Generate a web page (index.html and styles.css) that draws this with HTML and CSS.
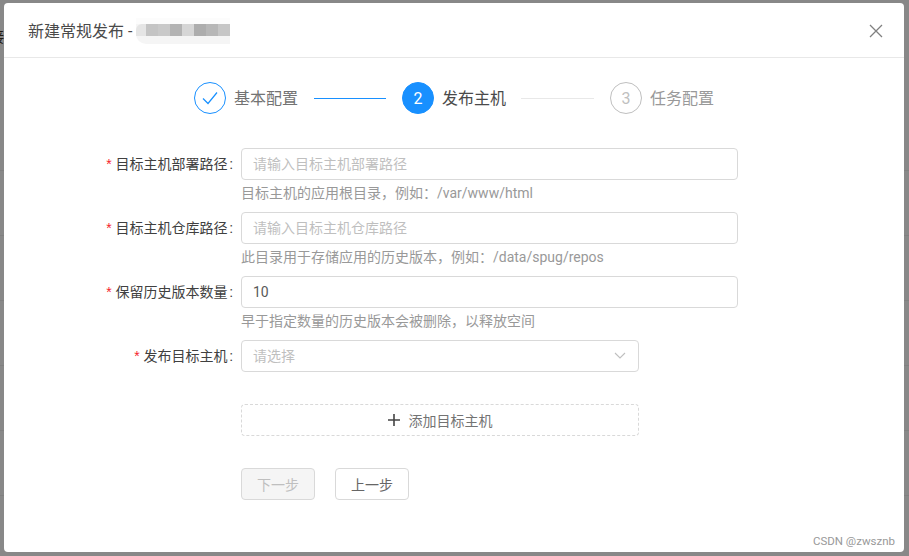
FILE: index.html
```html
<!DOCTYPE html>
<html lang="zh-CN">
<head>
    <meta charset="UTF-8">
    <meta name="viewport" content="width=device-width, initial-scale=1.0">
    <title>新建常规发布</title>
    <link rel="stylesheet" href="styles.css">
</head>
<body>
    <span class="backdrop-text">接</span>

    <div class="modal">
        <div class="modal-header">
            <div class="modal-title">
                <span>新建常规发布 -</span>
                <span class="mosaic">
                    <i class="m-first"></i><i class="m2"></i><i class="m3"></i><i class="m4"></i><i class="m5"></i><i class="m6"></i><i class="m7"></i><i class="m8"></i>
                </span>
            </div>
            <svg class="modal-close" viewBox="0 0 14 14" width="14" height="14">
                <path d="M1 1L13 13M13 1L1 13" fill="none" stroke="#808080" stroke-width="1.3"/>
            </svg>
        </div>

        <div class="steps">
            <div class="step step-done">
                <span class="step-icon">
                    <svg viewBox="0 0 16 14" width="16" height="14">
                        <path d="M1 7.5L6 12.5L15 1.5" fill="none" stroke="#1890ff" stroke-width="1.2"/>
                    </svg>
                </span>
                <span class="step-title">基本配置</span>
            </div>
            <span class="step-line line-done"></span>
            <div class="step step-active">
                <span class="step-icon">2</span>
                <span class="step-title">发布主机</span>
            </div>
            <span class="step-line line-wait"></span>
            <div class="step step-wait">
                <span class="step-icon">3</span>
                <span class="step-title">任务配置</span>
            </div>
        </div>

        <form class="form">
            <div class="form-group">
                <label class="required">目标主机部署路径</label>
                <div class="control">
                    <input type="text" placeholder="请输入目标主机部署路径">
                    <div class="extra">目标主机的应用根目录，例如：/var/www/html</div>
                </div>
            </div>
            <div class="form-group">
                <label class="required">目标主机仓库路径</label>
                <div class="control">
                    <input type="text" placeholder="请输入目标主机仓库路径">
                    <div class="extra">此目录用于存储应用的历史版本，例如：/data/spug/repos</div>
                </div>
            </div>
            <div class="form-group">
                <label class="required">保留历史版本数量</label>
                <div class="control">
                    <input type="text" value="10">
                    <div class="extra">早于指定数量的历史版本会被删除，以释放空间</div>
                </div>
            </div>
            <div class="form-group form-group-host">
                <label class="required">发布目标主机</label>
                <div class="control control-short">
                    <div class="select">
                        <span>请选择</span>
                        <svg viewBox="0 0 12 7" width="12" height="7">
                            <path d="M1 1L6 6L11 1" fill="none" stroke="#bfbfbf" stroke-width="1.1"/>
                        </svg>
                    </div>
                </div>
            </div>
            <div class="form-group form-group-add">
                <div class="control control-short">
                    <button type="button" class="btn-dashed">
                        <svg viewBox="0 0 12 12" width="12" height="12">
                            <path d="M6 0V12M0 6H12" fill="none" stroke="#444" stroke-width="1.6"/>
                        </svg>
                        <span>添加目标主机</span>
                    </button>
                </div>
            </div>
            <div class="form-actions">
                <button type="button" class="btn" disabled>下一步</button>
                <button type="button" class="btn">上一步</button>
            </div>
        </form>

        <div class="watermark">CSDN @zwsznb</div>
    </div>
</body>
</html>
```

FILE: styles.css
```css
* {
    box-sizing: border-box;
}

html, body {
    height: 100%;
    overflow: hidden;
}

body {
    position: relative;
    margin: 0;
    padding: 3px 5px 4px 4px;
    background-color: #888888;
    /* table rows showing through the mask, only below the header */
    background-image:
        linear-gradient(#888888 0 170px, transparent 170px),
        repeating-linear-gradient(to bottom, #888888 0 40px, #808080 40px 41px, #888888 41px 65px);
    font-family: Roboto, "Noto Sans CJK SC", sans-serif;
    font-size: 14px;
    color: #444;
}

.backdrop-text {
    position: absolute;
    left: -10px;
    top: 26px;
    font-size: 14px;
    color: #201810;
}

.modal {
    position: relative;
    height: 549px;
    background-color: #fff;
    border-radius: 4px;
}

.modal-header {
    display: flex;
    justify-content: space-between;
    align-items: center;
    height: 55px;
    padding: 0 21px 0 24px;
    border-bottom: 1px solid #e8e8e8;
}

.modal-title {
    display: flex;
    align-items: center;
    font-size: 16px;
    color: #4a4a4a;
}

.mosaic {
    display: flex;
    width: 94px;
    height: 26px;
    margin-left: 4px;
    margin-top: 2px;
    padding-top: 6px;
    border-bottom-left-radius: 10px;
    background: linear-gradient(#fcfcfc 0 6px, #f5f5f5 6px);
}

.mosaic i {
    width: 12px;
    height: 12px;
}

.mosaic .m-first {
    width: 10px;
    border-radius: 6px 0 0 0;
    background-color: #e5e5e5;
}

.m2 { background-color: #c4c4c4; }
.m3 { background-color: #c9c9c9; }
.m4 { background-color: #b3b3b3; }
.m5 { background-color: #d6d6d6; }
.m6 { background-color: #adadad; }
.m7 { background-color: #b7b7b7; }
.m8 { background-color: #c6c6c6; }

.modal-close {
    margin-top: 2px;
}

.steps {
    display: flex;
    align-items: center;
    justify-content: center;
    margin-top: 24px;
}

.step {
    display: flex;
    align-items: center;
    gap: 8px;
}

.step-icon {
    display: flex;
    align-items: center;
    justify-content: center;
    width: 32px;
    height: 32px;
    border: 1px solid #1890ff;
    border-radius: 50%;
    font-size: 16px;
}

.step-title {
    padding-top: 2px;
    font-size: 16px;
    line-height: 30px;
}

.step-done .step-title {
    color: #737373;
}

.step-active .step-icon {
    background-color: #1890ff;
    color: #fff;
}

.step-active .step-title {
    color: #4a4a4a;
}

.step-wait .step-icon {
    border-color: #bfbfbf;
    color: #bfbfbf;
}

.step-wait .step-title {
    color: #999;
}

.step-line {
    height: 1px;
    width: 72px;
    margin: 0 16px;
}

.line-done {
    background-color: #1890ff;
}

.line-wait {
    width: 73px;
    margin-left: 15px;
    background-color: #e8e8e8;
}

.form {
    margin-top: 34px;
}

.form-group {
    display: flex;
}

.form-group label {
    width: 237px;
    height: 32px;
    line-height: 32px;
    text-align: right;
    color: #404040;
    white-space: nowrap;
}

.required::before {
    content: "*";
    margin-right: 4px;
    color: #f5222d;
    font-family: "Liberation Sans", sans-serif;
}

.required::after {
    content: ":";
    margin: 0 8px 0 2px;
}

.control {
    width: 497px;
}

.control-short {
    width: 398px;
}

.control input {
    display: block;
    width: 100%;
    height: 32px;
    padding: 4px 11px;
    border: 1px solid #d9d9d9;
    border-radius: 4px;
    font-family: inherit;
    font-size: 14px;
    color: #595959;
    background-color: #fff;
}

.control input::placeholder {
    color: #bfbfbf;
}

.extra {
    height: 32px;
    padding-top: 2px;
    line-height: 22px;
    color: #999;
    white-space: nowrap;
}

.select {
    display: flex;
    justify-content: space-between;
    align-items: center;
    height: 32px;
    padding: 0 12px 2px 11px;
    border: 1px solid #d9d9d9;
    border-radius: 4px;
    color: #bfbfbf;
}

.form-group-host {
    margin-bottom: 32px;
}

.form-group-add {
    padding-left: 237px;
    margin-bottom: 32px;
}

.btn-dashed {
    display: flex;
    align-items: center;
    justify-content: center;
    gap: 9px;
    width: 100%;
    height: 32px;
    border: 1px dashed #d9d9d9;
    border-radius: 4px;
    background-color: #fff;
    font-family: inherit;
    font-size: 14px;
    color: #737373;
}

.form-actions {
    display: flex;
    gap: 20px;
    padding-left: 237px;
}

.btn {
    width: 74px;
    height: 32px;
    border: 1px solid #d9d9d9;
    border-radius: 4px;
    background-color: #fff;
    font-family: inherit;
    font-size: 14px;
    color: #666;
}

.btn:disabled {
    background-color: #f5f5f5;
    color: #bfbfbf;
}

.watermark {
    position: absolute;
    right: 9px;
    bottom: 3px;
    font-size: 11.5px;
    line-height: 16px;
    color: #999;
}
```
